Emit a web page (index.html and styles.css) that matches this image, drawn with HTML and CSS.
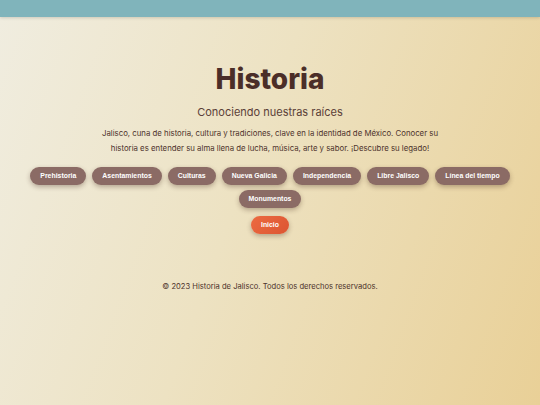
FILE: index.html
```html
<!DOCTYPE html>
<html lang="es">
<head>
<meta charset="utf-8">
<title>Historia</title>
<link rel="stylesheet" href="styles.css">
</head>
<body>
<header class="topbar"></header>
<main class="hero">
  <h1 class="title">Historia</h1>
  <p class="subtitle">Conociendo nuestras raíces</p>
  <p class="intro">Jalisco, cuna de historia, cultura y tradiciones, clave en la identidad de México. Conocer su historia es entender su alma llena de lucha, música, arte y sabor. ¡Descubre su legado!</p>
  <nav class="links">
    <a class="pill">Prehistoria</a>
    <a class="pill">Asentamientos</a>
    <a class="pill">Culturas</a>
    <a class="pill">Nueva Galicia</a>
    <a class="pill">Independencia</a>
    <a class="pill">Libre Jalisco</a>
    <a class="pill">Línea del tiempo</a>
    <a class="pill">Monumentos</a>
  </nav>
  <a class="pill home">Inicio</a>
</main>
<footer class="foot">© 2023 Historia de Jalisco. Todos los derechos reservados.</footer>
</body>
</html>
```
FILE: styles.css
```css
html, body {
  margin: 0;
  padding: 0;
}
body {
  width: 540px;
  height: 405px;
  overflow: hidden;
  background: linear-gradient(110deg, #f0ede0 0%, #ede2c2 45%, #e9d097 100%);
  font-family: "Inter", "Open Sans", sans-serif;
  color: #4a2f29;
}
.topbar {
  height: 17px;
  background: #80b4bb;
  box-shadow: 0 1px 3px rgba(0,0,0,0.15);
}
.hero {
  display: flex;
  flex-direction: column;
  align-items: center;
  padding-top: 44px;
}
.title {
  margin: 0;
  font-size: 28px;
  font-weight: 800;
  line-height: 36px;
  color: #4b2e28;
}
.subtitle {
  margin: 8px 0 0;
  font-size: 11px;
  line-height: 14px;
  color: #5b4038;
}
.intro {
  margin: 7px 0 0;
  width: 345px;
  text-align: center;
  font-size: 7.8px;
  line-height: 15px;
  color: #4d332c;
}
.links {
  margin-top: 11px;
  width: 500px;
  display: flex;
  flex-wrap: wrap;
  justify-content: center;
  gap: 5px 6px;
}
.pill {
  display: inline-block;
  height: 18px;
  line-height: 18px;
  padding: 0 10px;
  border-radius: 9px;
  background: #8b6b65;
  color: #fff;
  font-family: "Liberation Sans", Arial, sans-serif;
  font-weight: 700;
  font-size: 6.9px;
  box-shadow: 0 2px 5px rgba(60,30,20,0.32);
}
.home {
  margin-top: 8px;
  padding: 0 10px;
  background: linear-gradient(135deg, #ec6a40, #dc5532);
}
.foot {
  margin-top: 48px;
  text-align: center;
  font-size: 7.6px;
  line-height: 10px;
  color: #4d332c;
}
```
